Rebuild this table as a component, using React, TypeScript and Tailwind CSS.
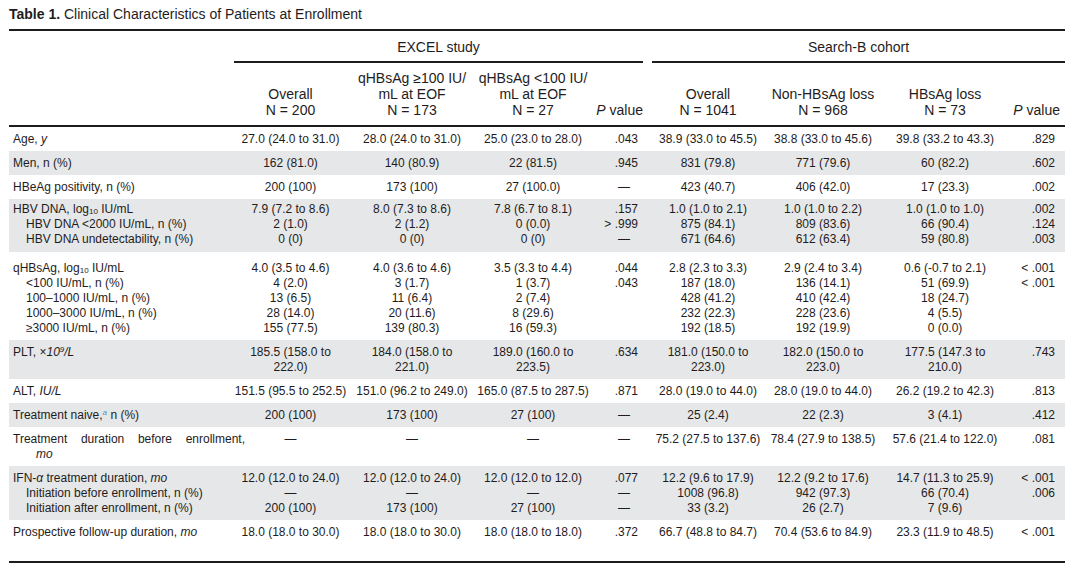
import type { ReactNode } from "react";

const GRID =
  "grid grid-cols-[225px_113px_130px_112px_63px_112px_118px_126px_57px]";

type Line = ReactNode;

interface RowData {
  label: Line[];
  cols: Line[][];
  shade?: boolean;
  pad?: string;
}

const Sub = ({ children }: { children: ReactNode }) => (
  <sub className="relative top-[1px] align-baseline text-[8px] leading-none">{children}</sub>
);

const log10 = (
  <>
    log<Sub>10</Sub>
  </>
);

const dash = "—";

const PDash = () => <span className="mr-[8px]">—</span>;

const rows: RowData[] = [
  {
    label: [
      <>
        Age, <i>y</i>
      </>,
    ],
    cols: [
      ["27.0 (24.0 to 31.0)"],
      ["28.0 (24.0 to 31.0)"],
      ["25.0 (23.0 to 28.0)"],
      [".043"],
      ["38.9 (33.0 to 45.5)"],
      ["38.8 (33.0 to 45.6)"],
      ["39.8 (33.2 to 43.3)"],
      [".829"],
    ],
  },
  {
    label: ["Men, n (%)"],
    shade: true,
    cols: [
      ["162 (81.0)"],
      ["140 (80.9)"],
      ["22 (81.5)"],
      [".945"],
      ["831 (79.8)"],
      ["771 (79.6)"],
      ["60 (82.2)"],
      [".602"],
    ],
  },
  {
    label: ["HBeAg positivity, n (%)"],
    cols: [
      ["200 (100)"],
      ["173 (100)"],
      ["27 (100.0)"],
      [<PDash />],
      ["423 (40.7)"],
      ["406 (42.0)"],
      ["17 (23.3)"],
      [".002"],
    ],
  },
  {
    label: [
      <>HBV DNA, {log10} IU/mL</>,
      "HBV DNA <2000 IU/mL, n (%)",
      "HBV DNA undetectability, n (%)",
    ],
    shade: true,
    pad: "pt-[3px] pb-[5px]",
    cols: [
      ["7.9 (7.2 to 8.6)", "2 (1.0)", "0 (0)"],
      ["8.0 (7.3 to 8.6)", "2 (1.2)", "0 (0)"],
      ["7.8 (6.7 to 8.1)", "0 (0.0)", "0 (0)"],
      [".157", "> .999", <PDash />],
      ["1.0 (1.0 to 2.1)", "875 (84.1)", "671 (64.6)"],
      ["1.0 (1.0 to 2.2)", "809 (83.6)", "612 (63.4)"],
      ["1.0 (1.0 to 1.0)", "66 (90.4)", "59 (80.8)"],
      [".002", ".124", ".003"],
    ],
  },
  {
    label: [
      <>qHBsAg, {log10} IU/mL</>,
      "<100 IU/mL, n (%)",
      "100–1000 IU/mL, n (%)",
      "1000–3000 IU/mL, n (%)",
      "≥3000 IU/mL, n (%)",
    ],
    pad: "pt-[9px] pb-[4px]",
    cols: [
      ["4.0 (3.5 to 4.6)", "4 (2.0)", "13 (6.5)", "28 (14.0)", "155 (77.5)"],
      ["4.0 (3.6 to 4.6)", "3 (1.7)", "11 (6.4)", "20 (11.6)", "139 (80.3)"],
      ["3.5 (3.3 to 4.4)", "1 (3.7)", "2 (7.4)", "8 (29.6)", "16 (59.3)"],
      [".044", ".043"],
      ["2.8 (2.3 to 3.3)", "187 (18.0)", "428 (41.2)", "232 (22.3)", "192 (18.5)"],
      ["2.9 (2.4 to 3.4)", "136 (14.1)", "410 (42.4)", "228 (23.6)", "192 (19.9)"],
      ["0.6 (-0.7 to 2.1)", "51 (69.9)", "18 (24.7)", "4 (5.5)", "0 (0.0)"],
      ["< .001", "< .001"],
    ],
  },
  {
    label: [
      <>
        PLT, ×
        <i>
          10<sup className="relative -top-[4px] align-baseline text-[8px] leading-none">9</sup>/L
        </i>
      </>,
    ],
    shade: true,
    cols: [
      ["185.5 (158.0 to", "222.0)"],
      ["184.0 (158.0 to", "221.0)"],
      ["189.0 (160.0 to", "223.5)"],
      [".634"],
      ["181.0 (150.0 to", "223.0)"],
      ["182.0 (150.0 to", "223.0)"],
      ["177.5 (147.3 to", "210.0)"],
      [".743"],
    ],
  },
  {
    label: [
      <>
        ALT, <i>IU/L</i>
      </>,
    ],
    cols: [
      ["151.5 (95.5 to 252.5)"],
      ["151.0 (96.2 to 249.0)"],
      ["165.0 (87.5 to 287.5)"],
      [".871"],
      ["28.0 (19.0 to 44.0)"],
      ["28.0 (19.0 to 44.0)"],
      ["26.2 (19.2 to 42.3)"],
      [".813"],
    ],
  },
  {
    label: [
      <>
        Treatment naive,
        <sup className="relative -top-[4px] align-baseline text-[8px] italic leading-none text-[#4a90c8]">
          a
        </sup>{" "}
        n (%)
      </>,
    ],
    shade: true,
    cols: [
      ["200 (100)"],
      ["173 (100)"],
      ["27 (100)"],
      [<PDash />],
      ["25 (2.4)"],
      ["22 (2.3)"],
      ["3 (4.1)"],
      [".412"],
    ],
  },
  {
    label: [
      <span className="block w-[232px] text-justify [text-align-last:justify]">
        Treatment duration before enrollment,
      </span>,
      <span className="pl-[10px] italic">mo</span>,
    ],
    cols: [
      [dash],
      [dash],
      [dash],
      [<PDash />],
      ["75.2 (27.5 to 137.6)"],
      ["78.4 (27.9 to 138.5)"],
      ["57.6 (21.4 to 122.0)"],
      [".081"],
    ],
  },
  {
    label: [
      <>
        IFN-<i>α</i> treatment duration, <i>mo</i>
      </>,
      "Initiation before enrollment, n (%)",
      "Initiation after enrollment, n (%)",
    ],
    shade: true,
    cols: [
      ["12.0 (12.0 to 24.0)", dash, "200 (100)"],
      ["12.0 (12.0 to 24.0)", dash, "173 (100)"],
      ["12.0 (12.0 to 12.0)", dash, "27 (100)"],
      [".077", <PDash />, <PDash />],
      ["12.2 (9.6 to 17.9)", "1008 (96.8)", "33 (3.2)"],
      ["12.2 (9.2 to 17.6)", "942 (97.3)", "26 (2.7)"],
      ["14.7 (11.3 to 25.9)", "66 (70.4)", "7 (9.6)"],
      ["< .001", ".006"],
    ],
  },
  {
    label: [
      <>
        Prospective follow-up duration, <i>mo</i>
      </>,
    ],
    pad: "pt-[5px] pb-[21px]",
    cols: [
      ["18.0 (18.0 to 30.0)"],
      ["18.0 (18.0 to 30.0)"],
      ["18.0 (18.0 to 18.0)"],
      [".372"],
      ["66.7 (48.8 to 84.7)"],
      ["70.4 (53.6 to 84.9)"],
      ["23.3 (11.9 to 48.5)"],
      ["< .001"],
    ],
  },
];

function BodyRow({ row }: { row: RowData }) {
  return (
    <div
      className={`${GRID} ${row.shade ? "bg-[#e6e7e8]" : ""} ${row.pad ?? "pt-[5px] pb-[4px]"}`}
    >
      <div>
        {row.label.map((l, i) => (
          <div key={i} className={`whitespace-nowrap ${i === 0 ? "pl-[4px]" : "pl-[17px]"}`}>
            {l}
          </div>
        ))}
      </div>
      {row.cols.map((lines, ci) => {
        const isP = ci === 3 || ci === 7;
        const align = isP ? (ci === 3 ? "text-right pr-[14px]" : "text-right pr-[10px]") : "text-center";
        return (
          <div key={ci} className={align}>
            {lines.map((l, i) => (
              <div key={i} className="whitespace-nowrap">
                {l}
              </div>
            ))}
          </div>
        );
      })}
    </div>
  );
}

function HeadCell({ lines, p }: { lines: ReactNode[]; p?: "l" | "r" }) {
  const align = p === "l" ? "text-right pr-[9px]" : p === "r" ? "text-right pr-[5px]" : "text-center";
  return (
    <div className={align}>
      {lines.map((l, i) => (
        <div key={i} className="whitespace-nowrap">
          {l}
        </div>
      ))}
    </div>
  );
}

export default function App() {
  const pval = (
    <>
      <i>P</i> value
    </>
  );
  return (
    <div className="min-h-[569px] w-[1080px] bg-white px-[9px] font-['Liberation_Sans',Arial,sans-serif] text-[12px] leading-[15px] text-[#1f1c1d]">
      <div className="pt-[6px] text-[14px] leading-[17px]">
        <span className="font-bold">Table 1.</span> Clinical Characteristics of Patients at Enrollment
      </div>
      <div className="mt-[6px] w-[1056px] border-t-2 border-[#1f1c1d] text-[14px]">
        <div className={`${GRID} pt-[9px]`}>
          <div />
          <div className="col-span-4 pr-[9px]">
            <div className="border-b-2 border-[#1f1c1d] pb-[6px] text-center">EXCEL study</div>
          </div>
          <div className="col-span-4">
            <div className="border-b-2 border-[#1f1c1d] pb-[6px] text-center">Search-B cohort</div>
          </div>
        </div>
        <div className={`${GRID} items-end border-b-2 border-[#1f1c1d] pt-[7px] pb-[7px] leading-[16px]`}>
          <div />
          <HeadCell lines={["Overall", "N = 200"]} />
          <HeadCell lines={["qHBsAg ≥100 IU/", "mL at EOF", "N = 173"]} />
          <HeadCell lines={["qHBsAg <100 IU/", "mL at EOF", "N = 27"]} />
          <HeadCell lines={[pval]} p="l" />
          <HeadCell lines={["Overall", "N = 1041"]} />
          <HeadCell lines={["Non-HBsAg loss", "N = 968"]} />
          <HeadCell lines={["HBsAg loss", "N = 73"]} />
          <HeadCell lines={[pval]} p="r" />
        </div>
        <div className="border-b-2 border-[#1f1c1d] text-[12px]">
          {rows.map((r, i) => (
            <BodyRow key={i} row={r} />
          ))}
        </div>
      </div>
    </div>
  );
}
